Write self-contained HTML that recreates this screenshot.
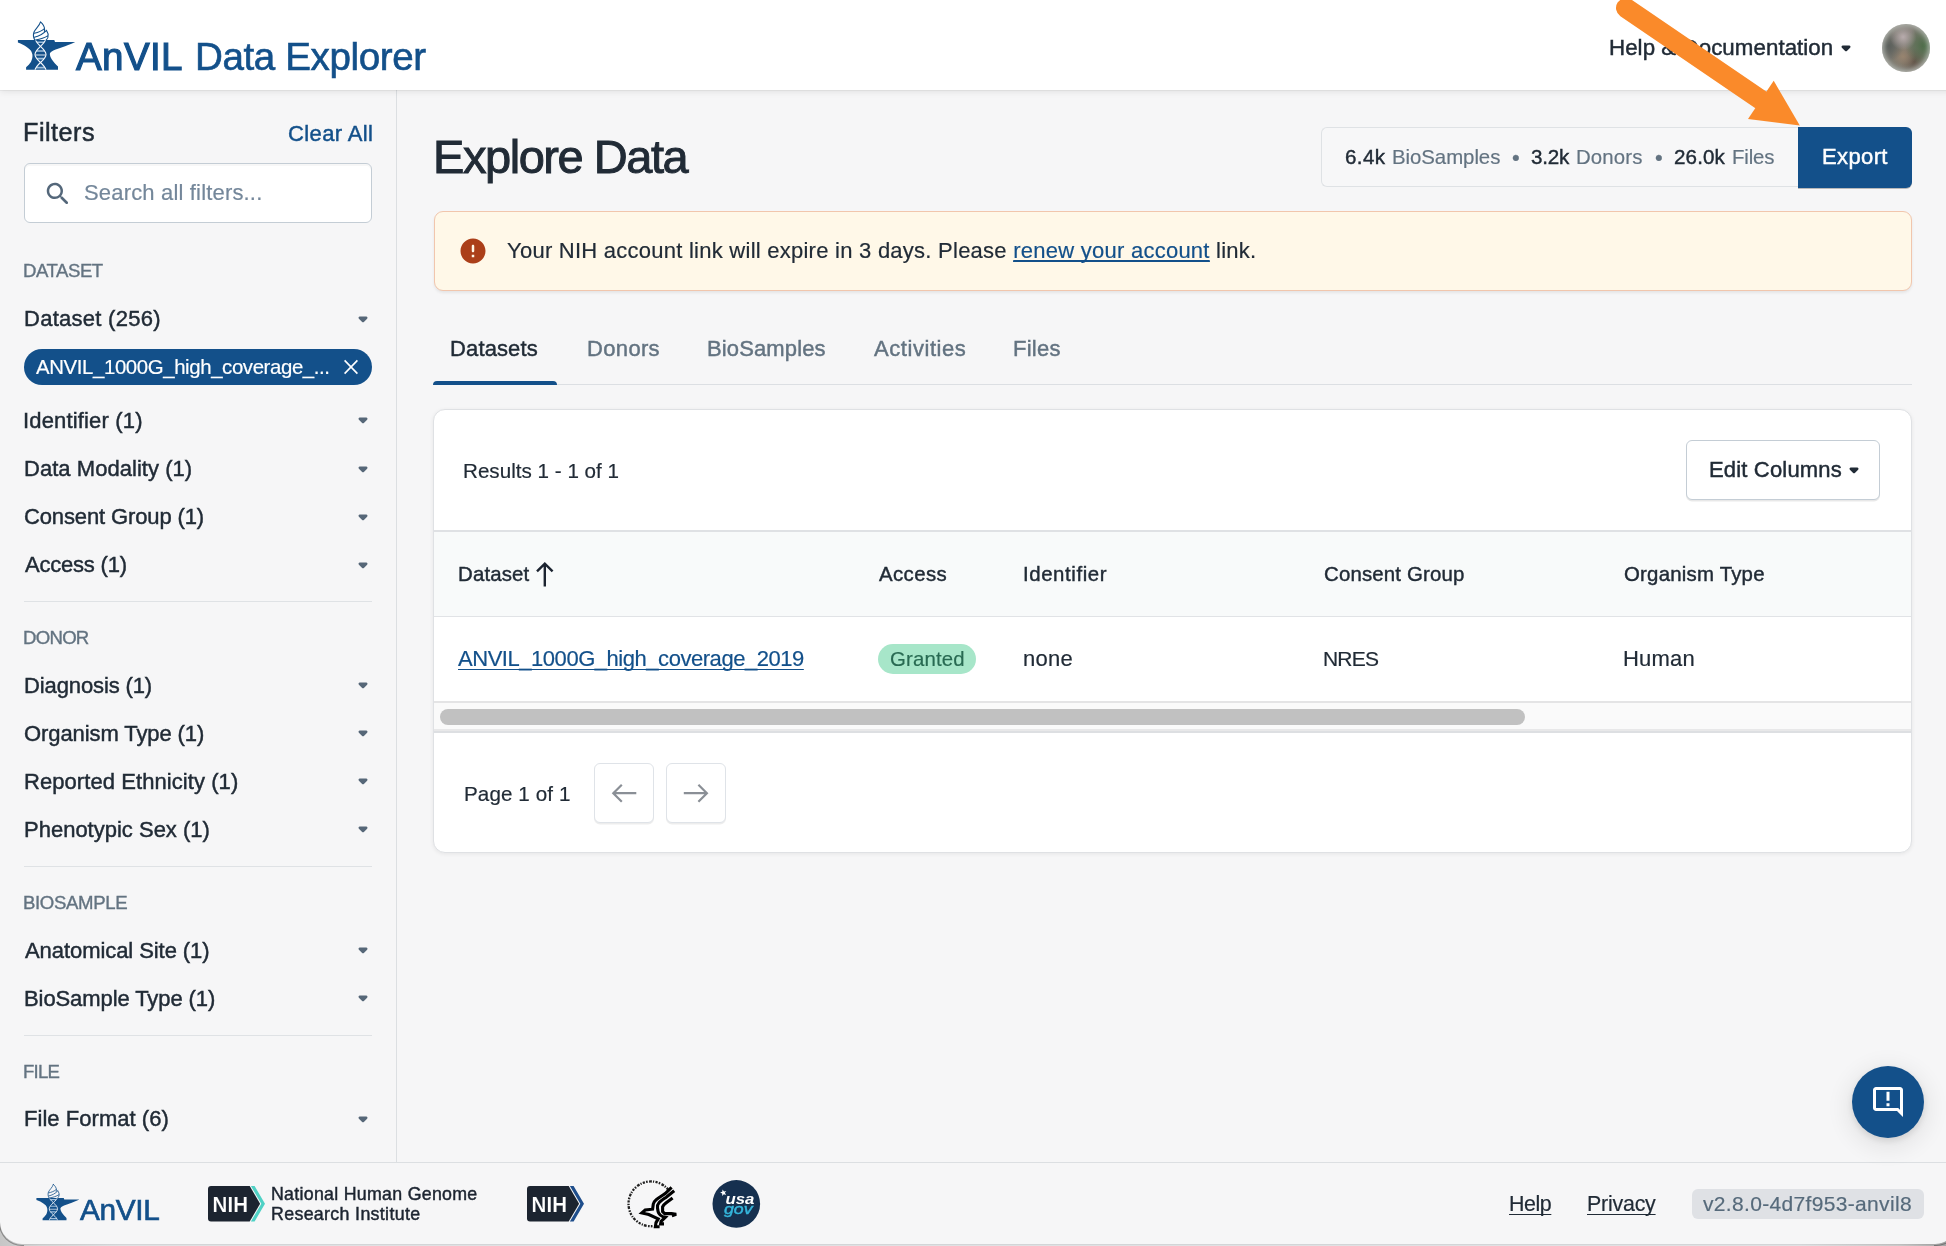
<!DOCTYPE html>
<html lang="en">
<head>
<meta charset="utf-8">
<title>AnVIL Data Explorer - Explore Data</title>
<style>

html,body{margin:0;padding:0}
body{width:1946px;height:1246px;overflow:hidden;position:relative;background:linear-gradient(to right,#c6c6c6 0,#d4d5d6 40px,#dfe1e3 120px,#dfe1e3 1800px,#c9c9c9 1900px,#a6a6a6 100%);font-family:"Liberation Sans", Arial, sans-serif;color:#212b36}
#win{position:absolute;left:0;top:0;width:1957px;height:1244px;background:#f6f6f7;border-radius:0 0 22px 22px;overflow:hidden;box-shadow:0 0 0 1px rgba(0,0,0,.05)}
.corner{position:absolute;width:24px;height:24px;top:1221px;border:1px solid rgba(0,0,0,.32);border-top:0}
#win *{position:absolute;box-sizing:border-box;margin:0;padding:0}
.t{white-space:pre;line-height:1;font-weight:400;font-style:normal;will-change:transform}
h1.t,h2.t,h3.t{font-weight:400}
a.t{text-decoration:none}
button.t{border:0;background:transparent;font-family:inherit;text-align:left;cursor:pointer;overflow:visible}
.ic{display:block;overflow:visible;will-change:transform}
header{left:0;top:0;width:1957px;height:90px;background:#fff;box-shadow:0 1px 0 rgba(0,0,0,.045),0 1.5px 7px rgba(0,0,0,.095)}
aside{left:0;top:90px;width:397px;height:1072px;border-right:1px solid #dcdfe2}
hr{border:0;height:1.5px;background:#dfe2e5}
.btn{background:#fff;border:1.5px solid #c4cdd5;border-radius:6px;box-shadow:0 1.5px 0 rgba(0,0,0,.07)}
footer{left:0;top:1162px;width:1957px;height:84px;border-top:1.5px solid #dcdfe2}
u{position:static!important;text-decoration:underline;text-decoration-thickness:1.4px;text-underline-offset:2.9px;text-decoration-skip-ink:none}

</style>
</head>
<body>
<div id="win">
<aside></aside>
<nav aria-label="Filters">
<h2 class="t" style="left:23.3px;top:118px;line-height:28px;font-size:25.2px;color:#212b36;letter-spacing:0.50px;-webkit-text-stroke:0.50px #212b36;">Filters</h2>
<button type="button" class="t" style="left:287.9px;top:121px;line-height:25px;font-size:22.0px;color:#13508a;letter-spacing:0.38px;-webkit-text-stroke:0.44px #13508a;">Clear All</button>
<div class="search" style="left:24px;top:162.9px;width:348px;height:59.8px;background:#fff;border:1.4px solid #c4cdd5;border-radius:6px;box-shadow:inset 0 2px 0 rgba(0,0,0,.03)"></div>
<svg class="ic" style="left:42.6px;top:178.5px" width="30" height="30" viewBox="0 0 24 24" fill="#54677a" ><path d="M15.5 14h-.79l-.28-.27c1.2-1.4 1.82-3.31 1.48-5.34-.47-2.78-2.79-5-5.59-5.34-4.23-.52-7.79 3.04-7.27 7.27.34 2.8 2.56 5.12 5.34 5.59 2.03.34 3.94-.28 5.34-1.48l.27.28v.79l4.25 4.25c.41.41 1.08.41 1.49 0 .41-.41.41-1.08 0-1.49L15.5 14zm-6 0C7.01 14 5 11.99 5 9.5S7.01 5 9.5 5 14 7.01 14 9.5 11.99 14 9.5 14z"/></svg>
<span class="t" style="left:83.8px;top:180px;line-height:25px;font-size:22.0px;color:#74879a;letter-spacing:0.17px;-webkit-text-stroke:0.20px #74879a;">Search all filters...</span>
<h3 class="t" style="left:23.2px;top:260px;line-height:21px;font-size:18.6px;color:#637381;letter-spacing:-0.47px;-webkit-text-stroke:0.37px #637381;">DATASET</h3>
<h3 class="t" style="left:23.2px;top:627px;line-height:21px;font-size:18.6px;color:#637381;letter-spacing:-0.73px;-webkit-text-stroke:0.37px #637381;">DONOR</h3>
<h3 class="t" style="left:23.2px;top:892px;line-height:21px;font-size:18.6px;color:#637381;letter-spacing:-0.36px;-webkit-text-stroke:0.37px #637381;">BIOSAMPLE</h3>
<h3 class="t" style="left:23.2px;top:1061px;line-height:21px;font-size:18.6px;color:#637381;letter-spacing:-0.75px;-webkit-text-stroke:0.37px #637381;">FILE</h3>
<span class="t" style="left:23.5px;top:306px;line-height:25px;font-size:22.0px;color:#212b36;letter-spacing:0.27px;-webkit-text-stroke:0.44px #212b36;">Dataset (256)</span>
<svg class="ic" style="left:348px;top:303.7px" width="30" height="30" viewBox="0 0 24 24" fill="#566778" ><path d="M8.71 11.71l2.59 2.59c.39.39 1.02.39 1.41 0l2.59-2.59c.63-.63.18-1.71-.71-1.71H9.41c-.89 0-1.33 1.08-.7 1.71z"/></svg>
<span class="t" style="left:23.4px;top:408px;line-height:25px;font-size:22.0px;color:#212b36;letter-spacing:0.16px;-webkit-text-stroke:0.44px #212b36;">Identifier (1)</span>
<svg class="ic" style="left:348px;top:405.4px" width="30" height="30" viewBox="0 0 24 24" fill="#566778" ><path d="M8.71 11.71l2.59 2.59c.39.39 1.02.39 1.41 0l2.59-2.59c.63-.63.18-1.71-.71-1.71H9.41c-.89 0-1.33 1.08-.7 1.71z"/></svg>
<span class="t" style="left:23.5px;top:456px;line-height:25px;font-size:22.0px;color:#212b36;letter-spacing:0.04px;-webkit-text-stroke:0.44px #212b36;">Data Modality (1)</span>
<svg class="ic" style="left:348px;top:453.6px" width="30" height="30" viewBox="0 0 24 24" fill="#566778" ><path d="M8.71 11.71l2.59 2.59c.39.39 1.02.39 1.41 0l2.59-2.59c.63-.63.18-1.71-.71-1.71H9.41c-.89 0-1.33 1.08-.7 1.71z"/></svg>
<span class="t" style="left:24.4px;top:504px;line-height:25px;font-size:22.0px;color:#212b36;letter-spacing:-0.13px;-webkit-text-stroke:0.44px #212b36;">Consent Group (1)</span>
<svg class="ic" style="left:348px;top:501.7px" width="30" height="30" viewBox="0 0 24 24" fill="#566778" ><path d="M8.71 11.71l2.59 2.59c.39.39 1.02.39 1.41 0l2.59-2.59c.63-.63.18-1.71-.71-1.71H9.41c-.89 0-1.33 1.08-.7 1.71z"/></svg>
<span class="t" style="left:24.8px;top:552px;line-height:25px;font-size:22.0px;color:#212b36;letter-spacing:-0.21px;-webkit-text-stroke:0.44px #212b36;">Access (1)</span>
<svg class="ic" style="left:348px;top:549.8px" width="30" height="30" viewBox="0 0 24 24" fill="#566778" ><path d="M8.71 11.71l2.59 2.59c.39.39 1.02.39 1.41 0l2.59-2.59c.63-.63.18-1.71-.71-1.71H9.41c-.89 0-1.33 1.08-.7 1.71z"/></svg>
<span class="t" style="left:23.5px;top:673px;line-height:25px;font-size:22.0px;color:#212b36;letter-spacing:-0.12px;-webkit-text-stroke:0.44px #212b36;">Diagnosis (1)</span>
<svg class="ic" style="left:348px;top:670.1px" width="30" height="30" viewBox="0 0 24 24" fill="#566778" ><path d="M8.71 11.71l2.59 2.59c.39.39 1.02.39 1.41 0l2.59-2.59c.63-.63.18-1.71-.71-1.71H9.41c-.89 0-1.33 1.08-.7 1.71z"/></svg>
<span class="t" style="left:24.4px;top:721px;line-height:25px;font-size:22.0px;color:#212b36;letter-spacing:-0.09px;-webkit-text-stroke:0.44px #212b36;">Organism Type (1)</span>
<svg class="ic" style="left:348px;top:718.2px" width="30" height="30" viewBox="0 0 24 24" fill="#566778" ><path d="M8.71 11.71l2.59 2.59c.39.39 1.02.39 1.41 0l2.59-2.59c.63-.63.18-1.71-.71-1.71H9.41c-.89 0-1.33 1.08-.7 1.71z"/></svg>
<span class="t" style="left:23.5px;top:769px;line-height:25px;font-size:22.0px;color:#212b36;letter-spacing:0.07px;-webkit-text-stroke:0.44px #212b36;">Reported Ethnicity (1)</span>
<svg class="ic" style="left:348px;top:766.2px" width="30" height="30" viewBox="0 0 24 24" fill="#566778" ><path d="M8.71 11.71l2.59 2.59c.39.39 1.02.39 1.41 0l2.59-2.59c.63-.63.18-1.71-.71-1.71H9.41c-.89 0-1.33 1.08-.7 1.71z"/></svg>
<span class="t" style="left:23.5px;top:817px;line-height:25px;font-size:22.0px;color:#212b36;-webkit-text-stroke:0.44px #212b36;">Phenotypic Sex (1)</span>
<svg class="ic" style="left:348px;top:814.3px" width="30" height="30" viewBox="0 0 24 24" fill="#566778" ><path d="M8.71 11.71l2.59 2.59c.39.39 1.02.39 1.41 0l2.59-2.59c.63-.63.18-1.71-.71-1.71H9.41c-.89 0-1.33 1.08-.7 1.71z"/></svg>
<span class="t" style="left:24.8px;top:938px;line-height:25px;font-size:22.0px;color:#212b36;letter-spacing:-0.07px;-webkit-text-stroke:0.44px #212b36;">Anatomical Site (1)</span>
<svg class="ic" style="left:348px;top:935.2px" width="30" height="30" viewBox="0 0 24 24" fill="#566778" ><path d="M8.71 11.71l2.59 2.59c.39.39 1.02.39 1.41 0l2.59-2.59c.63-.63.18-1.71-.71-1.71H9.41c-.89 0-1.33 1.08-.7 1.71z"/></svg>
<span class="t" style="left:23.5px;top:986px;line-height:25px;font-size:22.0px;color:#212b36;letter-spacing:-0.09px;-webkit-text-stroke:0.44px #212b36;">BioSample Type (1)</span>
<svg class="ic" style="left:348px;top:983.2px" width="30" height="30" viewBox="0 0 24 24" fill="#566778" ><path d="M8.71 11.71l2.59 2.59c.39.39 1.02.39 1.41 0l2.59-2.59c.63-.63.18-1.71-.71-1.71H9.41c-.89 0-1.33 1.08-.7 1.71z"/></svg>
<span class="t" style="left:23.5px;top:1106px;line-height:25px;font-size:22.0px;color:#212b36;letter-spacing:0.04px;-webkit-text-stroke:0.44px #212b36;">File Format (6)</span>
<svg class="ic" style="left:348px;top:1104px" width="30" height="30" viewBox="0 0 24 24" fill="#566778" ><path d="M8.71 11.71l2.59 2.59c.39.39 1.02.39 1.41 0l2.59-2.59c.63-.63.18-1.71-.71-1.71H9.41c-.89 0-1.33 1.08-.7 1.71z"/></svg>
<div class="chip" style="left:24px;top:349px;width:348px;height:36px;background:#13508a;border-radius:18px"></div>
<span class="t" style="left:36.1px;top:356px;line-height:22px;font-size:20.4px;color:#ffffff;letter-spacing:-0.39px;-webkit-text-stroke:0.18px #ffffff;">ANVIL_1000G_high_coverage_...</span>
<svg class="ic" style="left:343px;top:359px" width="16" height="16" viewBox="343 359 16 16"><path d="M344.6 360.4L357.4 373.6M357.4 360.4L344.6 373.6" stroke="#fff" stroke-width="1.6" fill="none"/></svg>
<hr style="left:24px;top:600.6px;width:348px">
<hr style="left:24px;top:865.6px;width:348px">
<hr style="left:24px;top:1034.6px;width:348px">
</nav>
<main>
<h1 class="t" style="left:433.1px;top:130px;line-height:53px;font-size:47.0px;color:#212b36;letter-spacing:-1.45px;-webkit-text-stroke:0.94px #212b36;">Explore Data</h1>
<div class="summary" style="left:1320.6px;top:127.3px;width:479.4px;height:59.3px;border:1.5px solid #dfe2e5;border-right:0;border-radius:6px 0 0 6px;background:#f7f7f8"></div>
<span class="t" style="left:1345.1px;top:145px;line-height:23px;font-size:20.6px;color:#212b36;letter-spacing:0.37px;-webkit-text-stroke:0.41px #212b36;">6.4k</span>
<span class="t" style="left:1391.7px;top:146px;line-height:22px;font-size:20.4px;color:#637381;letter-spacing:-0.05px;-webkit-text-stroke:0.18px #637381;">BioSamples</span>
<span class="t" style="left:1511.8px;top:145px;line-height:25px;font-size:22.0px;color:#637381;-webkit-text-stroke:0.20px #637381;">•</span>
<span class="t" style="left:1531.1px;top:145px;line-height:23px;font-size:20.6px;color:#212b36;letter-spacing:-0.23px;-webkit-text-stroke:0.41px #212b36;">3.2k</span>
<span class="t" style="left:1576.3px;top:146px;line-height:22px;font-size:20.4px;color:#637381;letter-spacing:0.14px;-webkit-text-stroke:0.18px #637381;">Donors</span>
<span class="t" style="left:1655.4px;top:145px;line-height:25px;font-size:22.0px;color:#637381;-webkit-text-stroke:0.20px #637381;">•</span>
<span class="t" style="left:1674.1px;top:145px;line-height:23px;font-size:20.6px;color:#212b36;letter-spacing:0.12px;-webkit-text-stroke:0.41px #212b36;">26.0k</span>
<span class="t" style="left:1732.0px;top:146px;line-height:22px;font-size:20.4px;color:#637381;letter-spacing:-0.17px;-webkit-text-stroke:0.18px #637381;">Files</span>
<div class="export" style="left:1798px;top:127px;width:114px;height:61px;background:#13508a;border-radius:0 6px 6px 0;box-shadow:0 1px 0 rgba(0,0,0,.25)"></div>
<a href="#" class="t" style="left:1821.9px;top:144px;line-height:25px;font-size:22.0px;color:#ffffff;letter-spacing:0.38px;-webkit-text-stroke:0.44px #ffffff;">Export</a>
<div class="alert" style="left:433.5px;top:211px;width:1478.5px;height:80px;background:#fff8e8;border:1.5px solid #f1c6ad;border-radius:9px;box-shadow:0 2px 3px rgba(0,0,0,.07)"></div>
<svg class="ic" style="left:458px;top:236px" width="30" height="30" viewBox="0 0 24 24" fill="#ab3f19" ><path d="M12 2C6.48 2 2 6.48 2 12s4.48 10 10 10 10-4.48 10-10S17.52 2 12 2zm0 11c-.55 0-1-.45-1-1V8c0-.55.45-1 1-1s1 .45 1 1v4c0 .55-.45 1-1 1zm1 4h-2v-2h2v2z"/></svg>
<p class="t" style="left:506.9px;top:238px;line-height:25px;font-size:22.0px;letter-spacing:0.25px;color:#212b36;-webkit-text-stroke:0.2px #212b36">Your NIH account link will expire in 3 days. Please <a href="#" style="position:static;color:#13508a;-webkit-text-stroke:0.2px #13508a"><u>renew your account</u></a> link.</p>
<div style="left:433.5px;top:383.5px;width:1478.5px;height:1.5px;background:#dcdfe3"></div>
<div style="left:433px;top:380.7px;width:124.2px;height:4.3px;background:#13508a;border-radius:4.5px 4.5px 0 0"></div>
<a role="tab" href="#" class="t" style="left:450.4px;top:336px;line-height:25px;font-size:22.0px;color:#212b36;letter-spacing:0.13px;-webkit-text-stroke:0.44px #212b36;">Datasets</a>
<a role="tab" href="#" class="t" style="left:586.7px;top:336px;line-height:25px;font-size:22.0px;color:#637381;letter-spacing:0.34px;-webkit-text-stroke:0.44px #637381;">Donors</a>
<a role="tab" href="#" class="t" style="left:706.8px;top:336px;line-height:25px;font-size:22.0px;color:#637381;letter-spacing:0.13px;-webkit-text-stroke:0.44px #637381;">BioSamples</a>
<a role="tab" href="#" class="t" style="left:874.0px;top:336px;line-height:25px;font-size:22.0px;color:#637381;letter-spacing:0.56px;-webkit-text-stroke:0.44px #637381;">Activities</a>
<a role="tab" href="#" class="t" style="left:1013.3px;top:336px;line-height:25px;font-size:22.0px;color:#637381;letter-spacing:0.24px;-webkit-text-stroke:0.44px #637381;">Files</a>
<div class="card" style="left:433px;top:409.3px;width:1479px;height:444px;background:#fff;border-radius:12px;border:1px solid #dfe1e4;box-shadow:0 1px 4px rgba(0,0,0,.07)"></div>
<span class="t" style="left:463.3px;top:459px;line-height:23px;font-size:20.6px;color:#212b36;letter-spacing:0.02px;-webkit-text-stroke:0.19px #212b36;">Results 1 - 1 of 1</span>
<div class="btn" style="left:1686.3px;top:440.3px;width:194.2px;height:59.5px;box-shadow:0 1.5px 0 rgba(0,0,0,.09)"></div>
<button type="button" class="t" style="left:1708.7px;top:457px;line-height:25px;font-size:22.0px;color:#212b36;letter-spacing:0.17px;-webkit-text-stroke:0.44px #212b36;">Edit Columns</button>
<svg class="ic" style="left:1839px;top:454.8px" width="30" height="30" viewBox="0 0 24 24" fill="#212b36" ><path d="M8.71 11.71l2.59 2.59c.39.39 1.02.39 1.41 0l2.59-2.59c.63-.63.18-1.71-.71-1.71H9.41c-.89 0-1.33 1.08-.7 1.71z"/></svg>
<div style="left:434px;top:530.2px;width:1477px;height:2px;background:#dfe1e4"></div>
<div style="left:434px;top:532.2px;width:1477px;height:83.8px;background:#f8fafa"></div>
<div style="left:434px;top:615.8px;width:1477px;height:1.2px;background:#e1e3e6"></div>
<span role="columnheader" class="t" style="left:457.6px;top:563px;line-height:22px;font-size:20.4px;color:#212b36;letter-spacing:0.16px;-webkit-text-stroke:0.41px #212b36;">Dataset</span>
<span role="columnheader" class="t" style="left:878.6px;top:563px;line-height:22px;font-size:20.4px;color:#212b36;letter-spacing:0.41px;-webkit-text-stroke:0.41px #212b36;">Access</span>
<span role="columnheader" class="t" style="left:1023.0px;top:563px;line-height:22px;font-size:20.4px;color:#212b36;letter-spacing:0.59px;-webkit-text-stroke:0.41px #212b36;">Identifier</span>
<span role="columnheader" class="t" style="left:1324.0px;top:563px;line-height:22px;font-size:20.4px;color:#212b36;letter-spacing:0.18px;-webkit-text-stroke:0.41px #212b36;">Consent Group</span>
<span role="columnheader" class="t" style="left:1624.0px;top:563px;line-height:22px;font-size:20.4px;color:#212b36;letter-spacing:0.22px;-webkit-text-stroke:0.41px #212b36;">Organism Type</span>
<svg class="ic" style="left:534px;top:560px" width="22" height="28" viewBox="534 560 22 28"><path d="M544.8 586.4V563.8M537 571.4L544.8 563.6L552.6 571.4" fill="none" stroke="#1c2430" stroke-width="2.4"/></svg>
<a href="#" class="t" style="left:458.4px;top:646px;line-height:25px;font-size:22.0px;color:#13508a;letter-spacing:-0.46px;-webkit-text-stroke:0.20px #13508a;text-decoration:underline;text-decoration-thickness:1.4px;text-underline-offset:2.9px;text-decoration-skip-ink:none;">ANVIL_1000G_high_coverage_2019</a>
<div class="chip-ok" style="left:877.5px;top:644px;width:98.5px;height:30px;background:#a7e6c9;border-radius:15px"></div>
<span class="t" style="left:889.5px;top:648px;line-height:22px;font-size:20.4px;color:#286a52;letter-spacing:0.16px;-webkit-text-stroke:0.18px #286a52;">Granted</span>
<span class="t" style="left:1023.1px;top:646px;line-height:25px;font-size:22.0px;color:#212b36;letter-spacing:0.27px;-webkit-text-stroke:0.20px #212b36;">none</span>
<span class="t" style="left:1323.1px;top:647px;line-height:23px;font-size:21.0px;color:#212b36;letter-spacing:-0.80px;-webkit-text-stroke:0.19px #212b36;">NRES</span>
<span class="t" style="left:1623.1px;top:646px;line-height:25px;font-size:22.0px;color:#212b36;letter-spacing:0.22px;-webkit-text-stroke:0.20px #212b36;">Human</span>
<div style="left:434px;top:701px;width:1477px;height:2px;background:#e4e4e5"></div>
<div style="left:434px;top:703px;width:1477px;height:26.2px;background:#fafafa"></div>
<div style="left:440px;top:709px;width:1085px;height:16px;background:#c1c1c1;border-radius:8px"></div>
<div style="left:434px;top:729.2px;width:1477px;height:1.8px;background:#e8e8e9"></div>
<div style="left:434px;top:731px;width:1477px;height:2px;background:#dddfe2"></div>
<span class="t" style="left:463.7px;top:782px;line-height:23px;font-size:20.6px;color:#212b36;letter-spacing:0.10px;-webkit-text-stroke:0.19px #212b36;">Page 1 of 1</span>
<div class="btn" style="left:594.2px;top:763.2px;width:59.6px;height:59.6px;border-color:#dfe3e8"></div>
<div class="btn" style="left:666.2px;top:763.2px;width:59.6px;height:59.6px;border-color:#dfe3e8"></div>
<svg class="ic" style="left:594px;top:763px" width="132" height="60" viewBox="594 763 132 60"><path d="M636.3 793.2H613.3000000000001M621.8000000000001 784.7L613.3000000000001 793.2L621.8000000000001 801.7" fill="none" stroke="#8a8f96" stroke-width="2.2" stroke-linejoin="miter"/><path d="M683.8 793.2H706.9M698.4 784.7L706.9 793.2L698.4 801.7" fill="none" stroke="#8a8f96" stroke-width="2.2" stroke-linejoin="miter"/></svg>
</main>
<footer></footer>
<svg class="ic anvilf" style="left:34.575px;top:1182.85px" width="46.5" height="39.0" viewBox="16 20 62 52"><defs><clipPath id="cpanvilf"><rect x="30" y="40.1" width="22" height="29.7"/></clipPath></defs><path d="M17.9 40.1H54.3L55 41.9L75.2 42.1C70 44.5 66 46 62.2 47.3C57 49 53.5 50.3 51.7 51.5C50.2 52.6 49.7 53.6 49.9 54.6C50.1 56.5 50.7 57.8 51.7 59.3C53.5 62 56 64.6 58 66.6V69.8H26.1V67.2C28 65.5 29.7 63.8 30.9 61.9C32.2 59.7 32.7 57 32.4 54.6C32 52.4 31.2 50.8 29.8 49.4C28 47.6 25.6 46.1 23 44.7C21.4 43.9 19.6 43.2 17.9 42.6Z" fill="#13508a"/><g clip-path="url(#cpanvilf)"><g stroke="#9fbfdc" stroke-width="1.6"><line x1="36.97" y1="42.2" x2="44.03" y2="42.2"/><line x1="36.55" y1="51.0" x2="44.45" y2="51.0"/><line x1="37.13" y1="58.6" x2="43.87" y2="58.6"/><line x1="36.30" y1="67.6" x2="44.70" y2="67.6"/></g><line x1="35.4" y1="55" x2="45.6" y2="55" stroke="#f2f6fa" stroke-width="0.9"/><path d="M46.0 38.2C46.0 44.10 35.0 48.50 35.0 54.400000000000006C35.0 60.30 46.0 64.70 46.0 70.6" fill="none" stroke="#f4f7fb" stroke-width="1.15"/><path d="M35.0 38.2C35.0 44.10 46.0 48.50 46.0 54.400000000000006C46.0 60.30 35.0 64.70 35.0 70.6" fill="none" stroke="#f4f7fb" stroke-width="1.15"/></g><path d="M40.5 21.8C39.6 25.8 35.2 28.8 33.9 32.2C33 34.8 33.3 37.6 34.7 40.1M40.5 21.8C42.6 23.6 44.5 26.2 44.6 29.2C44.6 30 44.5 30.6 44.3 31.2M46.5 30.4C47.9 32.4 48.6 35 47.9 37.4C47.5 38.5 46.9 39.4 46.1 40.1M34.2 33.2C38 32.4 41.8 31 44.4 28.6M34.2 37.3C38.6 36.4 43 34.2 46.5 30.4M35.4 39.9C40 39.2 44.6 37.8 47.9 35.6" fill="none" stroke="#13508a" stroke-width="1.05" stroke-linecap="round" stroke-linejoin="round"/></svg>
<span class="t" style="left:80.0px;top:1193px;line-height:33px;font-size:29.8px;color:#13508a;letter-spacing:-0.32px;-webkit-text-stroke:0.66px #13508a;">AnVIL</span>
<svg class="ic" style="left:208px;top:1186px" width="58" height="36" viewBox="0 0 58 36"><path d="M3 0H41.7L52.1 17.8L41.7 35.6H3A3 3 0 0 1 0 32.6V3A3 3 0 0 1 3 0Z" fill="#1c2430"/><path d="M42.9 0H46.6L57 17.8L46.6 35.6H42.9L53.3 17.8Z" fill="#4fd1c5"/><text x="4.6" y="25.7" font-family="Liberation Sans, Arial, sans-serif" font-weight="700" font-size="22.4" fill="#fff" stroke="#1c2430" stroke-width="0.2" textLength="35.4" lengthAdjust="spacingAndGlyphs">NIH</text></svg>
<span class="t" style="left:270.6px;top:1184px;line-height:20px;font-size:17.8px;color:#1c2430;letter-spacing:0.28px;-webkit-text-stroke:0.45px #1c2430;">National Human Genome</span>
<span class="t" style="left:270.6px;top:1204px;line-height:20px;font-size:17.8px;color:#1c2430;letter-spacing:0.34px;-webkit-text-stroke:0.45px #1c2430;">Research Institute</span>
<svg class="ic" style="left:527px;top:1186px" width="58" height="36" viewBox="0 0 58 36"><path d="M3 0H41.7L52.1 17.8L41.7 35.6H3A3 3 0 0 1 0 32.6V3A3 3 0 0 1 3 0Z" fill="#1c2430"/><path d="M42.9 0H46.6L57 17.8L46.6 35.6H42.9L53.3 17.8Z" fill="#1f4e8c"/><text x="4.6" y="25.7" font-family="Liberation Sans, Arial, sans-serif" font-weight="700" font-size="22.4" fill="#fff" stroke="#1c2430" stroke-width="0.2" textLength="35.4" lengthAdjust="spacingAndGlyphs">NIH</text></svg>
<svg class="ic" style="left:624px;top:1176px" width="56" height="56" viewBox="624 1176 56 56" fill="none" stroke="#000"><path d="M668.1 1189.5A22.4 22.4 0 1 0 652.5 1226.2" stroke-width="2.3" stroke="#222" stroke-dasharray="2.2 1.3 1.2 1.1 2.8 1.4 1.6 1.2"/><path d="M671.6 1187.4L665.2 1193.6C662 1196 658 1198 656 1199.9C654.4 1201.3 653.6 1202.6 653.3 1204L652.6 1209.2L645.2 1210L641.8 1213L648.8 1214.6L658.2 1218.9L656 1222.6L655.4 1226.8H659.6" stroke-width="3.1" stroke-linejoin="miter"/><path d="M674.2 1190.8L666.2 1197.2C663.4 1199.2 660.6 1201 659 1202.8C657.6 1204.4 657.2 1206.2 657.5 1208C657.7 1210 658 1211.8 658.8 1213.2C659.8 1214.9 661.2 1216 662.8 1216.7L665.4 1217.2L661.1 1221.3L660.6 1223.9H664" stroke-width="3.1"/><path d="M672.6 1197.9L666.2 1202.8C664.6 1204 663.2 1205.4 662.6 1206.9V1211.5L664.7 1213.6H671.4L676.2 1214.4L671.9 1215.9" stroke-width="3.1"/></svg>
<svg class="ic" style="left:712px;top:1179px" width="50" height="50" viewBox="712 1179 50 50"><circle cx="736.3" cy="1203.9" r="23.8" fill="#16304f"/><path d="M0 -3.2L0.9 -1L3.2 -0.9L1.4 0.6L2 2.9L0 1.6L-2 2.9L-1.4 0.6L-3.2 -0.9L-0.9 -1Z" transform="translate(723.4 1192.6) rotate(-15)" fill="#fff"/><text x="725.4" y="1203.6" font-family="Liberation Sans, Arial, sans-serif" font-style="italic" font-weight="700" font-size="15" fill="#fff" textLength="29" lengthAdjust="spacingAndGlyphs">usa</text><text x="724" y="1214.4" font-family="Liberation Sans, Arial, sans-serif" font-style="italic" font-weight="400" font-size="15.4" fill="#35b6dc" stroke="#35b6dc" stroke-width="0.45" textLength="28.6" lengthAdjust="spacingAndGlyphs">gov</text></svg>
<a href="#" class="t" style="left:1508.9px;top:1192px;line-height:24px;font-size:21.4px;color:#212b36;letter-spacing:-0.42px;-webkit-text-stroke:0.19px #212b36;text-decoration:underline;text-decoration-thickness:1.4px;text-underline-offset:2.9px;text-decoration-skip-ink:none;">Help</a>
<a href="#" class="t" style="left:1586.5px;top:1192px;line-height:24px;font-size:21.4px;color:#212b36;letter-spacing:-0.22px;-webkit-text-stroke:0.19px #212b36;text-decoration:underline;text-decoration-thickness:1.4px;text-underline-offset:2.9px;text-decoration-skip-ink:none;">Privacy</a>
<div style="left:1692.2px;top:1189px;width:231.8px;height:30px;background:#dfe1e5;border-radius:6px"></div>
<span class="t" style="left:1703.4px;top:1192px;line-height:23px;font-size:21.0px;color:#566a7b;letter-spacing:0.33px;-webkit-text-stroke:0.19px #566a7b;">v2.8.0-4d7f953-anvil8</span>
<div class="fab" style="left:1852px;top:1066px;width:72px;height:72px;background:#13508a;border-radius:50%;box-shadow:0 6px 22px 6px rgba(0,0,0,.07),0 3px 6px rgba(0,0,0,.10)"></div>
<svg class="ic" style="transform:scaleX(-1);left:1870px;top:1083.8px" width="36" height="36" viewBox="0 0 24 24" fill="#fff" ><path d="M20 2H4c-1.1 0-1.99.9-1.99 2L2 22l4-4h14c1.1 0 2-.9 2-2V4c0-1.1-.9-2-2-2zm0 14H5.17l-.59.59-.58.58V4h16v12zm-9-3.2h2v2h-2zm0-7.6h2v6h-2z"/></svg>
<header></header>
<svg class="ic anvilh" style="left:16px;top:20px" width="62.0" height="52.0" viewBox="16 20 62 52"><defs><clipPath id="cpanvilh"><rect x="30" y="40.1" width="22" height="29.7"/></clipPath></defs><path d="M17.9 40.1H54.3L55 41.9L75.2 42.1C70 44.5 66 46 62.2 47.3C57 49 53.5 50.3 51.7 51.5C50.2 52.6 49.7 53.6 49.9 54.6C50.1 56.5 50.7 57.8 51.7 59.3C53.5 62 56 64.6 58 66.6V69.8H26.1V67.2C28 65.5 29.7 63.8 30.9 61.9C32.2 59.7 32.7 57 32.4 54.6C32 52.4 31.2 50.8 29.8 49.4C28 47.6 25.6 46.1 23 44.7C21.4 43.9 19.6 43.2 17.9 42.6Z" fill="#13508a"/><g clip-path="url(#cpanvilh)"><g stroke="#9fbfdc" stroke-width="1.6"><line x1="36.97" y1="42.2" x2="44.03" y2="42.2"/><line x1="36.55" y1="51.0" x2="44.45" y2="51.0"/><line x1="37.13" y1="58.6" x2="43.87" y2="58.6"/><line x1="36.30" y1="67.6" x2="44.70" y2="67.6"/></g><line x1="35.4" y1="55" x2="45.6" y2="55" stroke="#f2f6fa" stroke-width="0.9"/><path d="M46.0 38.2C46.0 44.10 35.0 48.50 35.0 54.400000000000006C35.0 60.30 46.0 64.70 46.0 70.6" fill="none" stroke="#f4f7fb" stroke-width="1.15"/><path d="M35.0 38.2C35.0 44.10 46.0 48.50 46.0 54.400000000000006C46.0 60.30 35.0 64.70 35.0 70.6" fill="none" stroke="#f4f7fb" stroke-width="1.15"/></g><path d="M40.5 21.8C39.6 25.8 35.2 28.8 33.9 32.2C33 34.8 33.3 37.6 34.7 40.1M40.5 21.8C42.6 23.6 44.5 26.2 44.6 29.2C44.6 30 44.5 30.6 44.3 31.2M46.5 30.4C47.9 32.4 48.6 35 47.9 37.4C47.5 38.5 46.9 39.4 46.1 40.1M34.2 33.2C38 32.4 41.8 31 44.4 28.6M34.2 37.3C38.6 36.4 43 34.2 46.5 30.4M35.4 39.9C40 39.2 44.6 37.8 47.9 35.6" fill="none" stroke="#13508a" stroke-width="1.05" stroke-linecap="round" stroke-linejoin="round"/></svg>
<span class="t logo-a" style="left:75.7px;top:35px;line-height:43px;font-size:38.6px;color:#13508a;letter-spacing:0.35px;-webkit-text-stroke:1.16px #13508a;">AnVIL</span>
<span class="t logo-b" style="left:195.4px;top:35px;line-height:43px;font-size:38.6px;color:#13508a;letter-spacing:-0.39px;-webkit-text-stroke:0.62px #13508a;">Data Explorer</span>
<button type="button" class="t" style="left:1609.0px;top:35px;line-height:25px;font-size:22.3px;color:#212b36;letter-spacing:0.06px;-webkit-text-stroke:0.45px #212b36;">Help &amp; Documentation</button>
<svg class="ic" style="left:1831px;top:33.2px" width="30" height="30" viewBox="0 0 24 24" fill="#212b36" ><path d="M8.71 11.71l2.59 2.59c.39.39 1.02.39 1.41 0l2.59-2.59c.63-.63.18-1.71-.71-1.71H9.41c-.89 0-1.33 1.08-.7 1.71z"/></svg>
<div class="avatar" style="left:1881.8px;top:24px;width:48px;height:48px;border-radius:50%;background:radial-gradient(circle at 44% 27%,#b8acad 0,rgba(184,172,173,0) 30%),radial-gradient(circle at 12% 46%,#585d5a 0,rgba(88,93,90,0) 32%),radial-gradient(circle at 90% 45%,#4a6c46 0,rgba(74,108,70,0) 40%),radial-gradient(circle at 44% 68%,#98846f 0,rgba(152,132,111,0) 30%),radial-gradient(circle at 66% 78%,#64564a 0,rgba(100,86,74,0) 28%),#7a776e;box-shadow:inset 0 0 5px 2px rgba(196,202,196,.75)"></div>
<svg class="ic" style="left:1600px;top:0" width="220" height="140" viewBox="1600 0 220 140"><path d="M1626 8L1761 99.9" stroke="#fa8a2a" stroke-width="20" stroke-linecap="round" fill="none"/><path d="M1773.7 80.8L1748 118.9L1799.8 125.6Z" fill="#fa8a2a"/></svg>
</div>
<div class="corner" style="left:-1px;border-right:0;border-radius:0 0 0 23px"></div><div class="corner" style="left:1934px;border-left:0;border-radius:0 0 23px 0"></div>
</body>
</html>
